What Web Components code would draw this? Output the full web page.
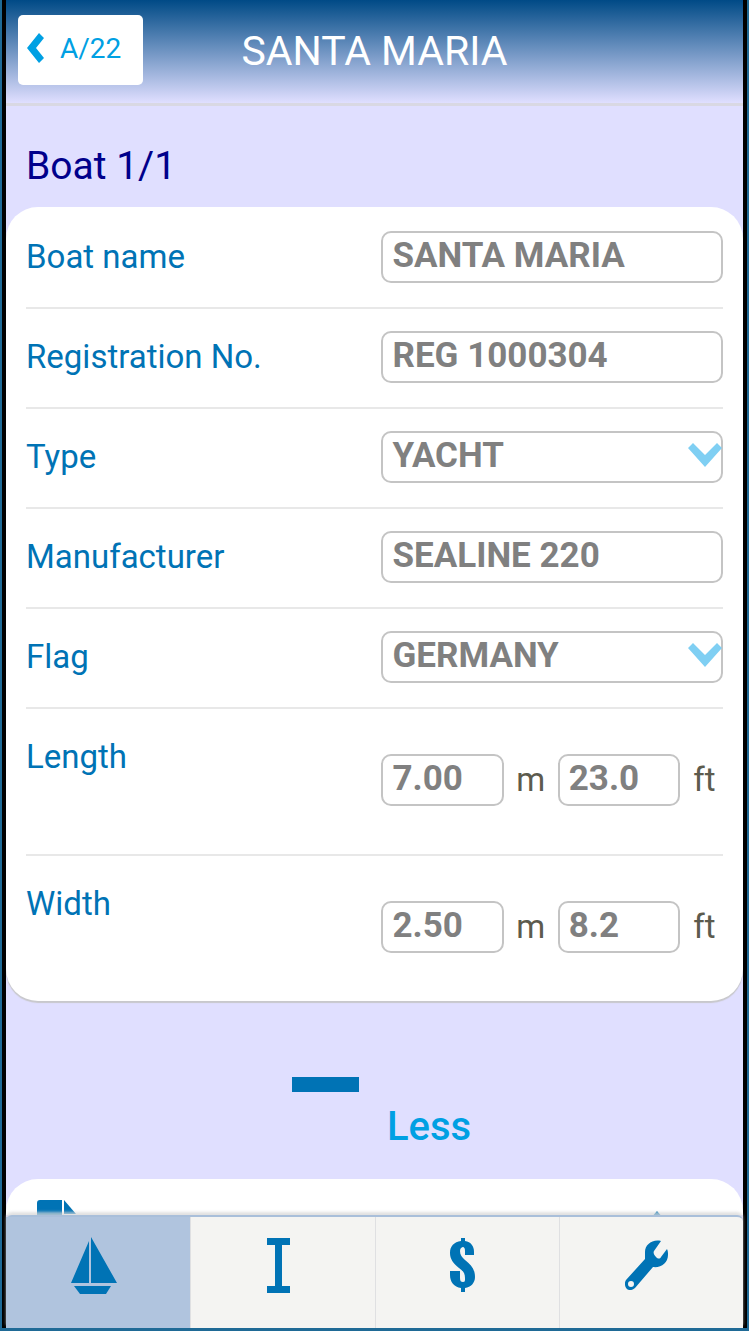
<!DOCTYPE html>
<html lang="en">
<head>
<meta charset="utf-8">
<meta name="viewport" content="width=device-width, initial-scale=1">
<title>Santa Maria</title>
<style>
    body {
        margin: 0;
        font-family: Roboto, "Liberation Sans", sans-serif;
        --blue: #0073b5;
        --light-blue: #00a0e3;
        --lavender: #e0dfff;
    }
</style>
</head>
<body>

<boat-app>
    <boat-header slot="header" back="A/22">SANTA MARIA</boat-header>

    <boat-card heading="Boat 1/1">
        <boat-field label="Boat name" value="SANTA MARIA"></boat-field>
        <boat-field label="Registration No." value="REG 1000304"></boat-field>
        <boat-field label="Type" value="YACHT" kind="select"></boat-field>
        <boat-field label="Manufacturer" value="SEALINE 220"></boat-field>
        <boat-field label="Flag" value="GERMANY" kind="select"></boat-field>
        <boat-measure label="Length" metres="7.00" feet="23.0"></boat-measure>
        <boat-measure label="Width" metres="2.50" feet="8.2"></boat-measure>
    </boat-card>

    <boat-toggle>Less</boat-toggle>

    <boat-card>
        <boat-documents></boat-documents>
    </boat-card>

    <boat-tabs slot="footer"></boat-tabs>
</boat-app>

<script>
    // Row and control styles shared by the two kinds of field
    const fieldStyle = `
        :host {
            display: grid;
            grid-template-columns: 51fr 49fr;
            border-bottom: 2px solid #e8e8e8;
        }

        :host(:last-child) {
            border-bottom: 0;
        }

        label {
            padding-top: 22px;
            color: var(--blue);
            font-size: 33px;
            line-height: 52px;
            white-space: nowrap;
        }

        .control {
            display: grid;
            padding: 22px 0 24px;
        }

        input, select {
            box-sizing: border-box;
            grid-area: 1 / 1;
            width: 100%;
            min-width: 0;
            height: 52px;
            margin: 0;
            padding: 0 9px 4px;
            border: 2px solid #c4c4c4;
            border-radius: 10px;
            background: #fff;
            color: #808080;
            font: bold 35px Roboto, "Liberation Sans", sans-serif;
            appearance: none;
        }
    `;


    class BoatApp extends HTMLElement {
        #template = `
            <style>
                :host {
                    display: flex;
                    box-sizing: border-box;
                    height: 100vh;
                    padding: 0 2px 3px;
                    background: #1f6a96;
                }

                .screen {
                    display: flex;
                    flex-direction: column;
                    flex: 1;
                    min-width: 0;
                    border: solid #000;
                    border-width: 0 4px;
                    background: var(--lavender);
                }

                main {
                    flex: 1;
                    min-height: 0;
                    overflow: hidden;
                }
            </style>

            <div class="screen">
                <slot name="header"></slot>
                <main><slot></slot></main>
                <slot name="footer"></slot>
            </div>
        `;

        constructor() {
            super();
            this.attachShadow({ mode: 'open' }).innerHTML = this.#template;
        }
    }


    class BoatHeader extends HTMLElement {
        #template = `
            <style>
                :host {
                    display: grid;
                    grid-template-columns: 1fr auto 1fr;
                    align-items: start;
                    padding: 15px 12px 16px;
                    border-bottom: 3px solid #d9d8e3;
                    background: linear-gradient(#004a86, var(--lavender));
                }

                button {
                    display: flex;
                    align-items: center;
                    justify-self: start;
                    gap: 16px;
                    height: 70px;
                    padding: 0 22px 4px 9px;
                    border: 0;
                    border-radius: 5px;
                    background: #fff;
                    color: var(--light-blue);
                    font: 28px Roboto, "Liberation Sans", sans-serif;
                }

                h1 {
                    margin: 0;
                    color: #fff;
                    font-size: 41px;
                    font-weight: normal;
                    line-height: 72px;
                }
            </style>

            <button type="button">
                <svg width="17" height="30" viewBox="0 0 17 30" aria-hidden="true">
                    <path d="M12 0l5 5-8 10 8 10-5 5L0 15z" fill="currentColor"/>
                </svg>
                <span id="tSpnBack"></span>
            </button>
            <h1><slot></slot></h1>
        `;

        constructor() {
            super();
            this.attachShadow({ mode: 'open' }).innerHTML = this.#template;
        }

        connectedCallback() {
            this.shadowRoot.querySelector('#tSpnBack').textContent = this.getAttribute('back');
        }
    }


    class BoatCard extends HTMLElement {
        #template = `
            <style>
                :host {
                    display: block;
                }

                h2 {
                    margin: 0;
                    padding: 36px 20px 17px;
                    color: #00008b;
                    font-size: 39px;
                    font-weight: normal;
                    line-height: 48px;
                }

                section {
                    padding: 2px 20px 0;
                    border-radius: 32px;
                    background: #fff;
                    box-shadow: 0 2px 1px #c8c8cc;
                }
            </style>

            <h2></h2>
            <section><slot></slot></section>
        `;

        constructor() {
            super();
            this.attachShadow({ mode: 'open' }).innerHTML = this.#template;
        }

        connectedCallback() {
            const heading = this.shadowRoot.querySelector('h2');
            if (this.hasAttribute('heading')) {
                heading.textContent = this.getAttribute('heading');
            } else {
                heading.remove();
            }
        }
    }


    class BoatField extends HTMLElement {
        #template = `
            <style>
                ${fieldStyle}

                svg {
                    grid-area: 1 / 1;
                    align-self: center;
                    justify-self: end;
                    margin: 0 1px 4px 0;
                    pointer-events: none;
                }
            </style>

            <label for="tControl"></label>
            <div class="control"></div>
        `;

        #arrow = `
            <svg width="34" height="24" viewBox="0 0 34 24" aria-hidden="true">
                <path d="M5 0l12 12L29 0l5 5-17 19L0 5z" fill="#7fcff3"/>
            </svg>
        `;

        constructor() {
            super();
            this.attachShadow({ mode: 'open' }).innerHTML = this.#template;
        }

        connectedCallback() {
            const value = this.getAttribute('value');
            const control = this.shadowRoot.querySelector('.control');
            this.shadowRoot.querySelector('label').textContent = this.getAttribute('label');

            if (this.getAttribute('kind') === 'select') {
                control.innerHTML = `<select id="tControl"><option>${value}</option></select>${this.#arrow}`;
            } else {
                control.innerHTML = `<input id="tControl" type="text" value="${value}">`;
            }
        }
    }


    class BoatMeasure extends HTMLElement {
        #template = `
            <style>
                ${fieldStyle}

                .control {
                    display: flex;
                    align-items: center;
                    padding: 45px 0 48px;
                }

                input {
                    flex: 1;
                }

                .unit {
                    width: 54px;
                    color: #5c5b4e;
                    font-size: 33px;
                    line-height: 52px;
                    text-align: center;
                }

                .unit:last-child {
                    box-sizing: border-box;
                    width: 43px;
                    padding-left: 6px;
                }
            </style>

            <label for="tInpMetres"></label>
            <div class="control">
                <input id="tInpMetres" type="text">
                <span class="unit">m</span>
                <input id="tInpFeet" type="text">
                <span class="unit">ft</span>
            </div>
        `;

        constructor() {
            super();
            this.attachShadow({ mode: 'open' }).innerHTML = this.#template;
        }

        connectedCallback() {
            const label = this.getAttribute('label');
            const feet = this.shadowRoot.querySelector('#tInpFeet');
            this.shadowRoot.querySelector('label').textContent = label;
            this.shadowRoot.querySelector('#tInpMetres').value = this.getAttribute('metres');
            feet.value = this.getAttribute('feet');
            feet.setAttribute('aria-label', `${label} in feet`);
        }
    }


    class BoatToggle extends HTMLElement {
        #template = `
            <style>
                :host {
                    display: flex;
                    justify-content: center;
                    padding: 70px 0 24px 14px;
                }

                button {
                    display: flex;
                    gap: 28px;
                    height: 84px;
                    padding: 0;
                    border: 0;
                    background: none;
                    color: var(--light-blue);
                    font: 500 40px Roboto, "Liberation Sans", sans-serif;
                }

                svg {
                    align-self: flex-start;
                    margin-top: 6px;
                }

                span {
                    align-self: flex-end;
                    line-height: 56px;
                }
            </style>

            <button type="button">
                <svg width="67" height="15" viewBox="0 0 67 15" aria-hidden="true">
                    <rect width="67" height="15" fill="#0073b5"/>
                </svg>
                <span><slot></slot></span>
            </button>
        `;

        constructor() {
            super();
            this.attachShadow({ mode: 'open' }).innerHTML = this.#template;
        }
    }


    class BoatDocuments extends HTMLElement {
        #template = `
            <style>
                :host {
                    display: flex;
                    justify-content: space-between;
                    padding: 19px 48px 24px 11px;
                    color: var(--blue);
                }

                svg {
                    fill: currentColor;
                }
            </style>

            <svg width="40" height="54" viewBox="0 0 40 54" aria-hidden="true">
                <path d="M3 0h22v16h14v35a3 3 0 0 1-3 3H3a3 3 0 0 1-3-3V3a3 3 0 0 1 3-3z"/>
                <path d="M27 0 39 14H27z"/>
            </svg>
            <svg width="36" height="54" viewBox="0 0 36 54" aria-hidden="true">
                <path d="M18 11 32 27H22v20h-8V27H4z"/>
            </svg>
        `;

        constructor() {
            super();
            this.attachShadow({ mode: 'open' }).innerHTML = this.#template;
        }
    }


    class BoatTabs extends HTMLElement {
        #template = `
            <style>
                :host {
                    position: relative;
                    display: block;
                    border-top: 2px solid #a9bfda;
                    border-radius: 6px 6px 0 0;
                    background: #f4f4f2;
                    box-shadow: 0 -3px 3px rgba(215, 215, 215, 0.75);
                }

                nav {
                    display: grid;
                    grid-template-columns: repeat(4, 1fr);
                }

                button {
                    display: flex;
                    align-items: center;
                    justify-content: center;
                    height: 111px;
                    padding: 0 9px 15px 0;
                    border: 0;
                    border-left: 1px solid #dfe0e2;
                    background: none;
                    color: var(--blue);
                }

                button[aria-current] {
                    border-left: 0;
                    background: #b0c4de;
                }

                svg {
                    fill: currentColor;
                }
            </style>

            <nav>
                <button type="button" aria-current="page" aria-label="Boat">
                    <svg width="46" height="57" viewBox="0 0 46 57">
                        <path d="M18 4v42H0zM20 0l26 46H20zM3 49h37l-5 8H9z"/>
                    </svg>
                </button>
                <button type="button" aria-label="Berth">
                    <svg width="23" height="55" viewBox="0 0 23 55">
                        <path d="M0 0h23v7h-8v41h8v7H0v-7h8V7H0z"/>
                    </svg>
                </button>
                <button type="button" aria-label="Payments">
                    <svg width="25" height="54" viewBox="0 0 25 54">
                        <path d="M11 0h4v3c6 1 9 5 9 11v3h-9v-4c0-3-1-4-2-4s-3 1-3 4c0 4 2 6 5 9 6 5 10 9 10 17 0 6-4 10-10 11v4h-4v-4C4 49 0 44 0 37v-4h10v7c0 3 1 4 3 4s2-1 2-4c0-5-2-7-6-10C3 25 0 21 0 15 0 8 4 4 11 3z"/>
                    </svg>
                </button>
                <button type="button" aria-label="Service">
                    <svg width="44" height="51" viewBox="0 0 44 51">
                        <path fill-rule="evenodd" d="M36 1C27-1 20 5 20 12v7L1 40c-2 3-1 7 1 9s6 1 8-1l18-21c8 1 15-4 15-12 0-2 0-4-1-6l-6 8c-1 2-3 2-5 0s-3-4-2-6zM6 41a3 3 0 1 1 0 6 3 3 0 0 1 0-6z"/>
                    </svg>
                </button>
            </nav>
        `;

        constructor() {
            super();
            this.attachShadow({ mode: 'open' }).innerHTML = this.#template;
        }
    }


    window.customElements.define('boat-app', BoatApp);
    window.customElements.define('boat-header', BoatHeader);
    window.customElements.define('boat-card', BoatCard);
    window.customElements.define('boat-field', BoatField);
    window.customElements.define('boat-measure', BoatMeasure);
    window.customElements.define('boat-toggle', BoatToggle);
    window.customElements.define('boat-documents', BoatDocuments);
    window.customElements.define('boat-tabs', BoatTabs);
</script>
</body>
</html>
